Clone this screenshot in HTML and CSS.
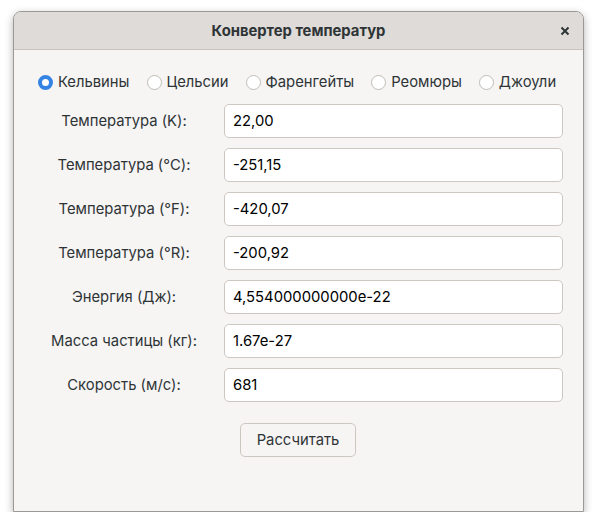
FILE: index.html
```html
<!DOCTYPE html>
<html lang="ru">
<head>
<meta charset="utf-8">
<link rel="stylesheet" href="styles.css">
</head>
<body>
<div class="window">
  <div class="titlebar">
    <div class="title">Конвертер температур</div>
    <div class="close"><svg width="10" height="10" viewBox="0 0 10 10"><path d="M1.5 1.5 L8.5 8.5 M8.5 1.5 L1.5 8.5" stroke="#2e3436" stroke-width="2" stroke-linecap="butt"/></svg></div>
  </div>
  <div class="content">
    <div class="radios">
      <label class="radio"><span class="dot checked"></span>Кельвины</label>
      <label class="radio"><span class="dot"></span>Цельсии</label>
      <label class="radio"><span class="dot"></span>Фаренгейты</label>
      <label class="radio"><span class="dot"></span>Реомюры</label>
      <label class="radio"><span class="dot"></span>Джоули</label>
    </div>
    <div class="form">
      <div class="lbl">Температура (K):</div><div class="field">22,00</div>
      <div class="lbl">Температура (°C):</div><div class="field">-251,15</div>
      <div class="lbl">Температура (°F):</div><div class="field">-420,07</div>
      <div class="lbl">Температура (°R):</div><div class="field">-200,92</div>
      <div class="lbl">Энергия (Дж):</div><div class="field">4,554000000000e-22</div>
      <div class="lbl">Масса частицы (кг):</div><div class="field">1.67e-27</div>
      <div class="lbl">Скорость (м/с):</div><div class="field">681</div>
    </div>
    <div class="actions">
      <button class="btn">Рассчитать</button>
    </div>
  </div>
</div>
</body>
</html>
```
FILE: styles.css
```css
html, body {
  margin: 0;
  padding: 0;
  background: #ffffff;
}
body {
  font-family: "Inter", "Noto Sans", sans-serif;
  font-size: 14.8px;
  color: #2e3436;
  padding: 11px 13px 0 13px;
}
.window {
  width: 569px;
  height: 499px;
  background: #f6f5f4;
  border: 1px solid #9a9996;
  border-radius: 8px 8px 0 0;
  box-shadow: 0 3px 9px rgba(0,0,0,0.3);
  overflow: hidden;
}
.titlebar {
  height: 37px;
  background: #dedbd8;
  border-bottom: 1px solid #c9c2bb;
  display: flex;
  align-items: center;
  justify-content: center;
  position: relative;
}
.title {
  font-weight: bold;
  font-size: 14.8px;
  color: #2e3436;
}
.close {
  position: absolute;
  right: 13px;
  top: 14px;
  width: 10px;
  height: 10px;
  display: flex;
}
.content {
  padding: 0 20px 0 24px;
}
.radios {
  display: flex;
  align-items: center;
  gap: 17px;
  margin-top: 23px;
  height: 18px;
}
.radio {
  display: flex;
  align-items: center;
  gap: 5px;
}
.dot {
  width: 13px;
  height: 13px;
  border: 1px solid #c0bcb6;
  border-radius: 50%;
  background: #ffffff;
  box-sizing: content-box;
}
.dot.checked {
  width: 7px;
  height: 7px;
  border: 4px solid #3584e4;
  background: #ffffff;
}
.form {
  display: grid;
  grid-template-columns: 172px 339px;
  column-gap: 14px;
  row-gap: 10px;
  margin-top: 13px;
  align-items: center;
}
.lbl {
  text-align: center;
}
.field {
  box-sizing: border-box;
  height: 34px;
  background: #ffffff;
  border: 1px solid #cdc7c2;
  border-radius: 5px;
  padding: 0 8px;
  display: flex;
  align-items: center;
  color: #000000;
}
.actions {
  padding-left: 202px;
  margin-top: 21px;
}
.btn {
  font-family: inherit;
  font-size: 14.8px;
  color: #2e3436;
  width: 116px;
  height: 34px;
  background: #f6f5f4;
  border: 1px solid #cdc7c2;
  border-radius: 5px;
}
```
